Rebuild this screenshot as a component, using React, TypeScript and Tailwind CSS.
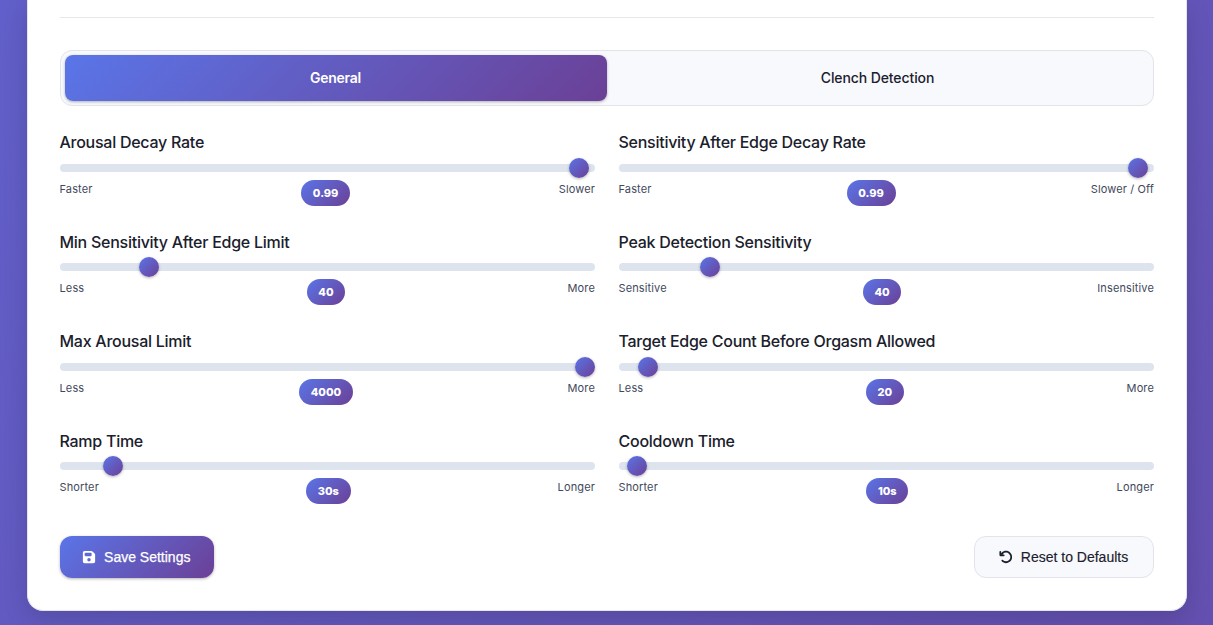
import React from "react";
import { FaArrowRotateLeft, FaFloppyDisk } from "react-icons/fa6";

type Setting = {
  label: string;
  low: string;
  high: string;
  value: string;
  fraction: number;
};

const settings: Setting[] = [
  { label: "Arousal Decay Rate", low: "Faster", high: "Slower", value: "0.99", fraction: 0.988 },
  { label: "Sensitivity After Edge Decay Rate", low: "Faster", high: "Slower / Off", value: "0.99", fraction: 0.988 },
  { label: "Min Sensitivity After Edge Limit", low: "Less", high: "More", value: "40", fraction: 0.1535 },
  { label: "Peak Detection Sensitivity", low: "Sensitive", high: "Insensitive", value: "40", fraction: 0.1573 },
  { label: "Max Arousal Limit", low: "Less", high: "More", value: "4000", fraction: 1 },
  { label: "Target Edge Count Before Orgasm Allowed", low: "Less", high: "More", value: "20", fraction: 0.0365 },
  { label: "Ramp Time", low: "Shorter", high: "Longer", value: "30s", fraction: 0.0835 },
  { label: "Cooldown Time", low: "Shorter", high: "Longer", value: "10s", fraction: 0.0155 },
];

function SliderField({ label, low, high, value, fraction }: Setting) {
  return (
    <div className="flex flex-col">
      <div className="-ml-[0.5px] h-6 whitespace-nowrap text-base leading-6 font-medium tracking-[-0.26px] text-[#1a202c]">
        {label}
      </div>
      <div className="mt-[9.8px] flex h-2 items-center rounded-full bg-[#dde4ee]">
        <div
          className="size-5 shrink-0 rounded-full bg-linear-[135deg,#5a75e8,#6b4096] shadow-[0_1px_3px_rgba(0,0,0,0.3)]"
          style={{ marginLeft: `calc((100% - 20px) * ${fraction})` }}
        />
      </div>
      <div className="-ml-[0.5px] mt-2 flex items-start justify-between text-[11px] leading-[18px] tracking-[0.13px] text-[#3f495c]">
        <span>{low}</span>
        <span className="flex h-[26px] items-center rounded-[13px] bg-linear-[135deg,#5a75e8,#6b4096] px-[11.8px] font-extrabold tracking-normal text-white">
          {value}
        </span>
        <span>{high}</span>
      </div>
    </div>
  );
}

export default function App() {
  return (
    <div className="h-[625px] overflow-hidden bg-linear-[135deg,#615fc9,#6450b0] px-[27px] font-['Inter',sans-serif]">
      <main className="flex h-[611px] w-[1160px] flex-col rounded-b-2xl border border-t-0 border-[#e2e4ee] bg-white px-8 shadow-[0_8px_24px_rgba(0,0,0,0.15)]">
        <div className="h-[18px] shrink-0 border-b border-[#e5e7eb]" />
        <div className="mt-8 flex h-14 w-[1094px] shrink-0 rounded-xl border border-[#e2e4ea] bg-[#f8f9fd] p-1 text-sm font-medium tracking-[-0.1px]">
          <button className="flex-1 rounded-lg bg-linear-[135deg,#5a75e8,#6b4096] pr-px font-semibold tracking-[-0.25px] text-white shadow-[0_1px_3px_rgba(0,0,0,0.3)]">
            General
          </button>
          <button className="flex-1 pr-px text-[#1a202c]">Clench Detection</button>
        </div>
        <section className="mt-6 grid auto-rows-[99.5px] grid-cols-2 gap-x-6">
          {settings.map((s) => (
            <SliderField key={s.label} {...s} />
          ))}
        </section>
        <footer className="mt-2 flex justify-between font-['Liberation_Sans',sans-serif] text-sm">
          <button className="flex h-[42px] w-[154px] items-center justify-center gap-2 rounded-xl bg-linear-[135deg,#5a75e8,#6b4096] pr-[1.5px] text-white shadow-[0_1px_3px_rgba(0,0,0,0.3)] [-webkit-text-stroke:0.25px_white]">
            <FaFloppyDisk className="size-[14px]" />
            Save Settings
          </button>
          <button className="flex h-[42px] w-[180px] items-center justify-center gap-2 rounded-xl border border-[#e2e4ea] bg-[#f8f9fd] pr-px text-[#1a202c] [-webkit-text-stroke:0.15px_#1a202c]">
            <FaArrowRotateLeft className="size-[14px]" />
            Reset to Defaults
          </button>
        </footer>
      </main>
    </div>
  );
}
